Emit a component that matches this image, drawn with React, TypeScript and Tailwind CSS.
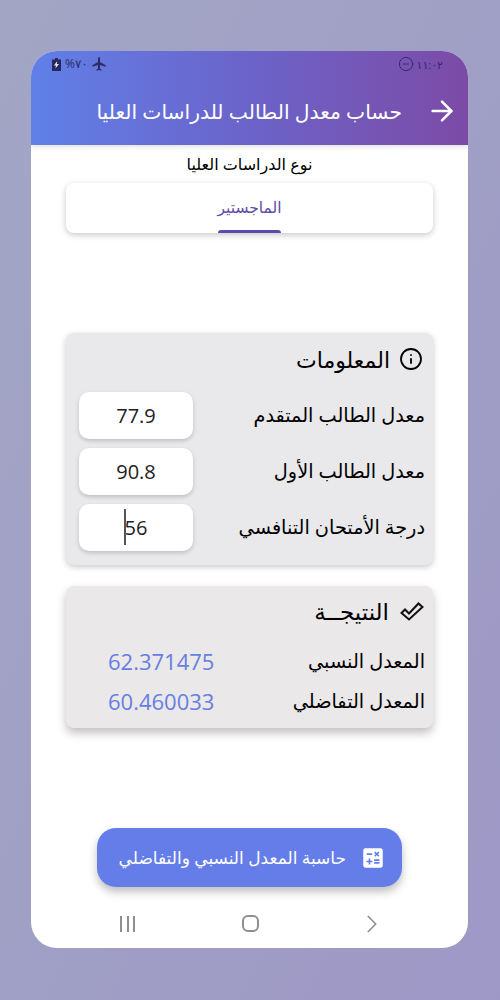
import React from 'react';
import { ArrowRight, Info, CircleMinus, ChevronRight } from 'lucide-react';
import { MdCalculate, MdAirplanemodeActive } from 'react-icons/md';

const inputs = [
  { label: 'معدل الطالب المتقدم', value: '77.9' },
  { label: 'معدل الطالب الأول', value: '90.8' },
  { label: 'درجة الأمتحان التنافسي', value: '56', focused: true },
];

const results = [
  { label: 'المعدل النسبي', value: '62.371475' },
  { label: 'المعدل التفاضلي', value: '60.460033' },
];

const OutlineCheck = () => (
  <svg width="24" height="19" viewBox="0 0 24 19" fill="none" stroke="#111" strokeWidth="2" strokeLinejoin="miter">
    <path d="M1.5 11 L5 7.5 L9 11.5 L18.5 1.5 L22.5 5 L9 17.5 Z" />
  </svg>
);

const BatteryCharging = () => (
  <svg width="9" height="13" viewBox="0 0 9 13">
    <path d="M3 0 H6 V1.5 H9 V13 H0 V1.5 H3 Z" fill="#2a2760" />
    <path d="M5.2 3 L2 7.5 H4 L3.4 10.5 L7 6 H4.8 Z" fill="#e8e8f5" />
  </svg>
);

export default function App() {
  return (
    <div
      dir="rtl"
      className="w-[500px] h-[1000px] overflow-hidden bg-gradient-to-br from-[#a2a6c4] to-[#9e98c6] pt-[51px] pl-[31px] pr-[32px] [font-family:'Open_Sans','DejaVu_Sans',sans-serif]"
    >
      <div className="w-[437px] h-[897px] bg-white rounded-[26px] overflow-hidden flex flex-col">
        {/* Header */}
        <div className="h-[94px] shrink-0 bg-gradient-to-l from-[#7b4ba6] via-[#6b63c9] to-[#5f80e8] shadow-[0_2px_5px_rgba(0,0,0,0.12)] relative z-10">
          <div className="h-[26px] pl-[21px] pr-[25px] flex items-center justify-between text-[#2f2a66]">
            <div className="flex items-center gap-[2px]">
              <span className="text-[11px] leading-none">١١:٠٢</span>
              <CircleMinus className="w-[16px] h-[16px]" strokeWidth={1.4} />
            </div>
            <div dir="ltr" className="flex items-center gap-[4px]">
              <BatteryCharging />
              <span className="text-[12px] leading-none">%٧٠</span>
              <MdAirplanemodeActive className="w-[16px] h-[16px] -ml-[1px]" />
            </div>
          </div>
          <div className="flex items-center h-[68px] pr-[10px] gap-[24px]">
            <ArrowRight className="w-[32px] h-[32px] text-white" strokeWidth={1.9} />
            <span className="text-white text-[20.3px] leading-none whitespace-nowrap">
              حساب معدل الطالب للدراسات العليا
            </span>
          </div>
        </div>

        {/* Body */}
        <div className="flex-1 flex flex-col items-center">
          <div className="h-[38px] flex items-center text-[16px] text-black">نوع الدراسات العليا</div>

          <div className="w-[367px] h-[50px] bg-white rounded-[8px] shadow-[0_2px_6px_rgba(0,0,0,0.22)] flex flex-col items-center relative">
            <span className="mt-[17px] text-[15.5px] leading-none text-[#5f4ba6]">الماجستير</span>
            <span className="absolute bottom-0 w-[63px] h-[3px] rounded-t-[3px] bg-[#5a4ca8]" />
          </div>

          <div className="w-[367px] h-[232px] mt-[100px] bg-[#e9e8eb] rounded-[8px] shadow-[0_2px_6px_rgba(0,0,0,0.22)] pr-[8px] pl-[13px]">
            <div className="h-[59px] flex items-center gap-[9px] pr-[2px] pb-[7px]">
              <Info className="w-[24px] h-[24px] text-black" strokeWidth={1.8} />
              <span className="text-[22px] text-black leading-none">المعلومات</span>
            </div>
            <div className="flex flex-col gap-[9px]">
              {inputs.map((row) => (
                <div key={row.label} className="flex items-center justify-between h-[47px]">
                  <span className="text-[19.3px] text-black whitespace-nowrap">{row.label}</span>
                  <div dir="ltr" className="w-[114px] h-[47px] bg-white rounded-[10px] shadow-[0_2px_4px_rgba(0,0,0,0.18)] flex items-center justify-center relative text-[20px] text-[#222]">
                    {row.focused && <span className="absolute left-[45px] top-[5px] w-[2px] h-[36px] bg-[#555]" />}
                    <span>{row.value}</span>
                  </div>
                </div>
              ))}
            </div>
          </div>

          <div className="w-[367px] h-[142px] mt-[21px] bg-[#ebe8ea] rounded-[8px] shadow-[0_5px_10px_rgba(0,0,0,0.25)] pr-[8px] pl-[42px]">
            <div className="h-[60px] flex items-center gap-[11px] pr-[1px] pb-[9px]">
              <OutlineCheck />
              <span className="text-[23px] text-black leading-none">النتيجــة</span>
            </div>
            <div className="flex flex-col gap-[9px]">
              {results.map((row) => (
                <div key={row.label} className="flex items-center justify-between h-[31px]">
                  <span className="text-[19.3px] text-black whitespace-nowrap">{row.label}</span>
                  <span className="text-[22px] text-[#6580e0]">{row.value}</span>
                </div>
              ))}
            </div>
          </div>

          <button className="w-[305px] h-[59px] mt-[100px] bg-[#647de9] rounded-[19px] shadow-[0_5px_8px_rgba(0,0,0,0.25)] flex items-center pr-[16px] gap-[14px] text-white">
            <MdCalculate className="w-[26px] h-[26px]" />
            <span className="text-[17px] whitespace-nowrap">حاسبة المعدل النسبي والتفاضلي</span>
          </button>

          {/* Android nav bar */}
          <div dir="ltr" className="w-full flex-1 flex items-center justify-between pt-[12px] pl-[89px] pr-[81px] text-[#8f8f8f]">
            <div className="flex gap-[4.5px]">
              <span className="w-[2px] h-[16px] bg-[#8f8f8f]" />
              <span className="w-[2px] h-[16px] bg-[#8f8f8f]" />
              <span className="w-[2px] h-[16px] bg-[#8f8f8f]" />
            </div>
            <span className="w-[17px] h-[17px] ml-[8px] rounded-[6px] border-2 border-[#8f8f8f]" />
            <ChevronRight className="w-[30px] h-[30px]" strokeWidth={1.3} />
          </div>
        </div>
      </div>
    </div>
  );
}
